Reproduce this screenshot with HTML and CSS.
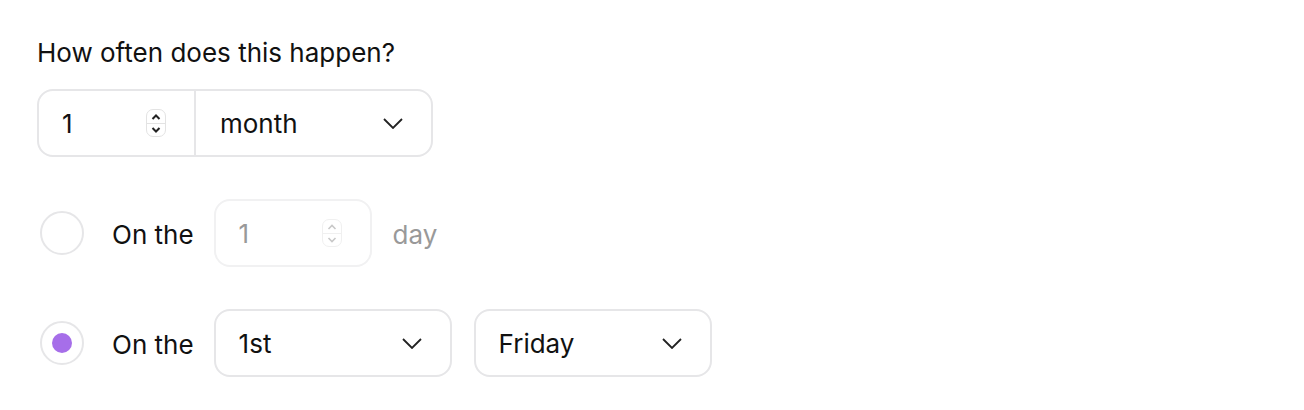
FILE: index.html
```html
<!DOCTYPE html>
<html>
<head>
<meta charset="utf-8">
<link rel="stylesheet" href="styles.css">
</head>
<body>
<div class="form">
  <div class="label">How often does this happen?</div>
  <div class="group">
    <div class="num">
      <span class="val">1</span>
      <span class="spin">
        <svg class="up" width="10" height="6" viewBox="0 0 10 6"><polyline points="1.5,5 5,1.5 8.5,5" fill="none" stroke="#222" stroke-width="2"/></svg>
        <svg class="down" width="10" height="6" viewBox="0 0 10 6"><polyline points="1.5,1 5,4.5 8.5,1" fill="none" stroke="#222" stroke-width="2"/></svg>
      </span>
    </div>
    <div class="sel grow">
      <span class="val">month</span>
      <svg class="chev" width="20" height="11" viewBox="0 0 20 11"><polyline points="1,1 10,10 19,1" fill="none" stroke="#222" stroke-width="1.8"/></svg>
    </div>
  </div>

  <div class="row first">
    <span class="radio"></span>
    <span class="on">On the</span>
    <div class="box num disabled">
      <span class="val">1</span>
      <span class="spin">
        <svg class="up" width="10" height="6" viewBox="0 0 10 6"><polyline points="1.5,5 5,1.5 8.5,5" fill="none" stroke="#c8c8c8" stroke-width="1.6"/></svg>
        <svg class="down" width="10" height="6" viewBox="0 0 10 6"><polyline points="1.5,1 5,4.5 8.5,1" fill="none" stroke="#c8c8c8" stroke-width="1.6"/></svg>
      </span>
    </div>
    <span class="unit">day</span>
  </div>

  <div class="row">
    <span class="radio checked"><span class="dot"></span></span>
    <span class="on">On the</span>
    <div class="box sel wide">
      <span class="val">1st</span>
      <svg class="chev" width="20" height="11" viewBox="0 0 20 11"><polyline points="1,1 10,10 19,1" fill="none" stroke="#222" stroke-width="1.8"/></svg>
    </div>
    <div class="box sel wide">
      <span class="val">Friday</span>
      <svg class="chev" width="20" height="11" viewBox="0 0 20 11"><polyline points="1,1 10,10 19,1" fill="none" stroke="#222" stroke-width="1.8"/></svg>
    </div>
  </div>
</div>
</body>
</html>
```
FILE: styles.css
```css
* { box-sizing: border-box; }
html, body { margin: 0; background: #fff; }
body {
  font-family: Inter, "Noto Sans", sans-serif;
  color: #111;
  font-size: 26px;
}
.form {
  padding: 36px 0 0 37px;
  display: flex;
  flex-direction: column;
}
.label {
  line-height: 34px;
  height: 34px;
  margin-bottom: 19px;
}
.group {
  display: flex;
  width: 396px;
  height: 68px;
  border: 2px solid #e6e6e8;
  border-radius: 16px;
}
.num {
  width: 157px;
  flex: none;
  display: flex;
  align-items: center;
  justify-content: space-between;
  padding: 0 28px 0 23px;
  border-right: 2px solid #e6e6e8;
}
.val { line-height: 30px; padding-top: 2px; }
.spin {
  width: 20px;
  height: 28px;
  border: 1px solid #e3e3e3;
  border-radius: 7px;
  display: flex;
  flex-direction: column;
  align-items: center;
  justify-content: space-around;
  position: relative;
}
.spin::after {
  content: "";
  position: absolute;
  left: 0; right: 0; top: 13px;
  height: 1px;
  background: #e3e3e3;
}
.sel {
  display: flex;
  align-items: center;
  justify-content: space-between;
  padding: 0 28px 0 24px;
}
.grow { flex: 1; }
.row {
  display: flex;
  align-items: center;
  margin-top: 42px;
  height: 68px;
}
.radio {
  width: 44px;
  height: 44px;
  flex: none;
  margin-left: 3px;
  border: 2px solid #e6e6e8;
  border-radius: 50%;
  display: flex;
  align-items: center;
  justify-content: center;
}
.dot {
  width: 20px;
  height: 20px;
  border-radius: 50%;
  background: #a66ee9;
}
.on {
  margin-left: 28px;
  margin-right: 20px;
  padding-top: 2px;
}
.box {
  height: 68px;
  flex: none;
  border: 2px solid #e6e6e8;
  border-radius: 16px;
}
.box.num {
  width: 158px;
  padding: 0 28px 0 23px;
  border-right: 2px solid #e6e6e8;
}
.disabled {
  border-color: #f1f1f2 !important;
  color: #999;
}
.disabled .spin { border-color: #f0f0f0; }
.disabled .spin::after { background: #f0f0f0; }
.unit {
  margin-left: 21px;
  color: #999;
  padding-top: 2px;
}
.wide {
  width: 238px;
  padding-left: 23px;
  margin-right: 22px;
}
```
